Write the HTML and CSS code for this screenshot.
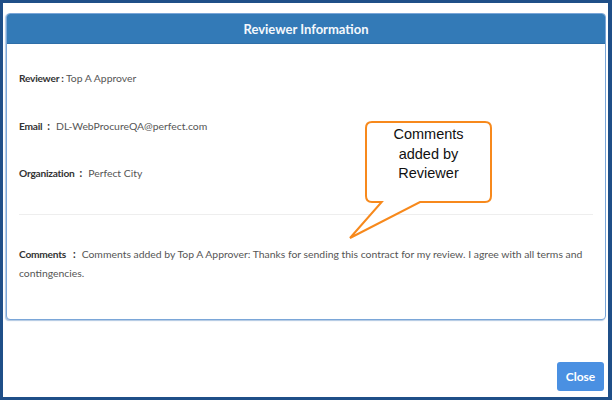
FILE: index.html
```html
<!DOCTYPE html>
<html>
<head>
<meta charset="utf-8">
<link rel="stylesheet" href="styles.css">
</head>
<body>
<div class="frame">
  <div class="panel">
    <div class="panel-head">Reviewer Information</div>
    <div class="panel-body">
      <div class="row"><span class="lbl">Reviewer :</span> <span class="val">Top A Approver</span></div>
      <div class="row"><span class="lbl">Email</span><span class="colon">:</span><span class="val">DL-WebProcureQA@perfect.com</span></div>
      <div class="row"><span class="lbl">Organization</span><span class="colon">:</span><span class="val">Perfect City</span></div>
      <hr class="sep">
      <div class="comments"><span class="lbl">Comments</span><span class="colon wide">:</span><span class="val">Comments added by Top A Approver: Thanks for sending this contract for my review. I agree with all terms and contingencies.</span></div>
    </div>
  </div>
  <div class="footer"><button class="btn-close">Close</button></div>
  <div class="callout">
    <svg class="callout-shape" width="160" height="130" viewBox="0 0 160 130">
      <path d="M32 7 H145 Q151 7 151 13 V81 Q151 87 145 87 H80 L10 123 L41.7 87 H32 Q26 87 26 81 V13 Q26 7 32 7 Z" fill="#ffffff" stroke="#f7891c" stroke-width="2" stroke-linejoin="miter"/>
    </svg>
    <div class="callout-text">Comments<br>added by<br>Reviewer</div>
  </div>
</div>
</body>
</html>
```
FILE: styles.css
```css
* { box-sizing: border-box; }
html, body { margin: 0; padding: 0; background: #ffffff; }
.frame {
  position: relative;
  width: 612px;
  height: 400px;
  border-style: solid;
  border-color: #1f4f88;
  border-width: 3px 4px 3px 3px;
  padding: 10px 0 0 3px;
  font-family: Lato, "Open Sans", sans-serif;
}
.panel {
  width: 600px;
  height: 307px;
  border: 1px solid #7aa6d8;
  border-radius: 4px;
  box-shadow: -1px 1px 1px rgba(80, 130, 190, 0.45);
  overflow: hidden;
  background: #fff;
}
.panel-head {
  height: 30px;
  background: #337ab7;
  color: #f4f8fc;
  font-size: 13px;
  font-weight: 700;
  text-align: center;
  line-height: 30px;
  border-bottom: 1px solid #2e6ea8;
}
.panel-body {
  padding: 26px 12px 0 12px;
  font-size: 10.4px;
  color: #555;
}
.row {
  height: 16px;
  line-height: 16px;
  margin-bottom: 31.5px;
}
.row:nth-child(3) { margin-bottom: 33px; }
.lbl { font-weight: 700; color: #333; font-size: 10.2px; letter-spacing: -0.25px; }
.colon { display: inline-block; padding: 0 6px 0 5px; color: #333; font-weight: 700; }
.colon.wide { padding: 0 6px 0 7px; }
.val { color: #555; }
.sep {
  margin: 0;
  border: 0;
  border-top: 1px solid #eeeeee;
  height: 0;
}
.comments {
  margin-top: 30px;
  line-height: 18.5px;
}
.footer {
  display: flex;
  justify-content: flex-end;
  padding: 42px 4px 0 0;
}
.btn-close {
  width: 47px;
  height: 29px;
  border: 0;
  border-radius: 3px;
  background: #4a90e2;
  color: #ffffff;
  font-family: Lato, "Open Sans", sans-serif;
  font-size: 12px;
  font-weight: 700;
  padding: 0;
}
.callout {
  position: absolute;
  left: 337px;
  top: 112px;
  width: 160px;
  height: 130px;
}
.callout-shape { position: absolute; left: 0; top: 0; }
.callout-text {
  position: absolute;
  left: 26px;
  top: 10px;
  width: 125px;
  text-align: center;
  font-family: "Liberation Sans", Arial, sans-serif;
  font-size: 14.5px;
  line-height: 19.5px;
  color: #111;
}
```
